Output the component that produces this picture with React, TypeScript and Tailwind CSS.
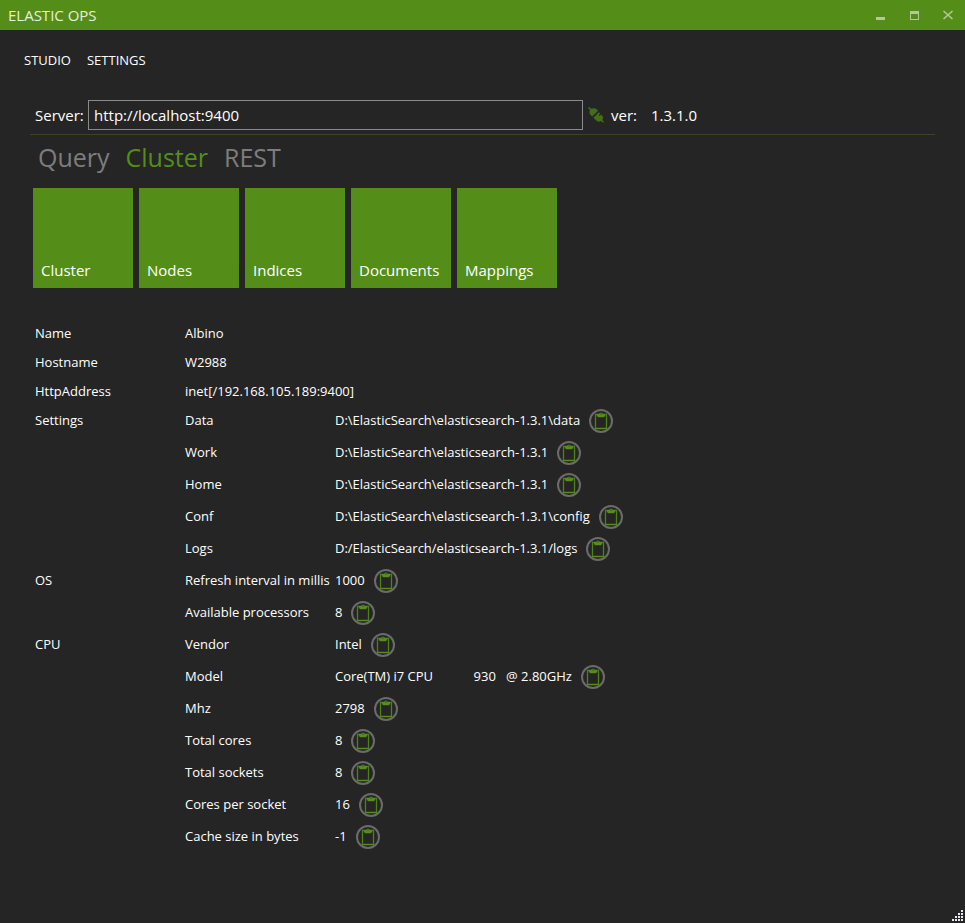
import React from "react";

type Row = { section?: string; span?: number; label: string; value?: string };

const general = [
  ["Name", "Albino"],
  ["Hostname", "W2988"],
  ["HttpAddress", "inet[/192.168.105.189:9400]"],
];

const details: Row[] = [
  { section: "Settings", span: 5, label: "Data", value: "D:\\ElasticSearch\\elasticsearch-1.3.1\\data" },
  { label: "Work", value: "D:\\ElasticSearch\\elasticsearch-1.3.1" },
  { label: "Home", value: "D:\\ElasticSearch\\elasticsearch-1.3.1" },
  { label: "Conf", value: "D:\\ElasticSearch\\elasticsearch-1.3.1\\config" },
  { label: "Logs", value: "D:/ElasticSearch/elasticsearch-1.3.1/logs" },
  { section: "OS", span: 2, label: "Refresh interval in millis", value: "1000" },
  { label: "Available processors", value: "8" },
  { section: "CPU", span: 7, label: "Vendor", value: "Intel" },
  { label: "Model", value: "Core(TM) i7 CPU            930   @ 2.80GHz" },
  { label: "Mhz", value: "2798" },
  { label: "Total cores", value: "8" },
  { label: "Total sockets", value: "8" },
  { label: "Cores per socket", value: "16" },
  { label: "Cache size in bytes", value: "-1" },
];

const tiles = ["Cluster", "Nodes", "Indices", "Documents", "Mappings"];

function CopyButton({ label }: { label: string }) {
  return (
    <button type="button" aria-label={`Copy ${label}`} className="size-6 shrink-0">
      <svg viewBox="0 0 24 24" className="size-6" fill="none">
        <circle cx="12" cy="12" r="11" stroke="#6b6b6b" strokeWidth="2" />
        <path d="M6.500 5.500h11v14h-11z" stroke="#4c8316" strokeWidth="1.300" />
        <path d="M6 19h12v1H6z" fill="#549019" />
        <path d="M8 5h2.300c0-.8.7-1.300 1.700-1.300s1.700.5 1.700 1.300H16v2l-1 1.300H9L8 7z" fill="#549019" />
        <path d="M11.500 4.600h1v.8h-1z" fill="#252525" />
      </svg>
    </button>
  );
}

function PlugIcon() {
  return (
    <svg viewBox="0 0 16 16" className="size-4" fill="#436f1c" role="img" aria-label="Connected">
      <path d="M0 .8 1 0l2.300 1.800C5.300.7 7.200 1 8.500 2.300L10 3.800 8.600 5.200 7.400 6.400 6.200 7.600 4.200 9.600 2.600 8C1.300 6.500 1.200 4.800 2 3.100z" />
      <path d="M10.800 5.200l1.400 1.400-1.500 1.500.9.900 1.500-1.500.9.900c1.300 1.400 1.200 3.200.3 4.600L16 15l-.9.800-2-1.700c-1.700.9-3.600.7-4.900-.6L5.400 10.700 7.700 8.400z" />
    </svg>
  );
}

export default function App() {
  return (
    <div className="relative flex min-h-screen flex-col bg-[#252525] font-['Open_Sans','Noto_Sans',sans-serif] text-white">
      <header className="flex h-[30px] items-center justify-between bg-[#548e19] pr-[9px] pl-2 text-[#e6efdd]">
        <h1 className="text-[15px]">ELASTIC OPS</h1>
        <div className="flex gap-[18px]">
          <button type="button" aria-label="Minimize" className="size-4">
            <svg viewBox="0 0 16 16" fill="#b0cc94"><path d="M4 10h9v3H4z" /></svg>
          </button>
          <button type="button" aria-label="Maximize" className="size-4">
            <svg viewBox="0 0 16 16" fill="#b0cc94"><path fillRule="evenodd" d="M4 4h9v9H4zM5 7v5h7V7z" /></svg>
          </button>
          <button type="button" aria-label="Close" className="size-4">
            <svg viewBox="0 0 16 16" stroke="#b0cc94" strokeWidth="1.6"><path d="M3.500 4l9 8M12.500 4l-9 8" /></svg>
          </button>
        </div>
      </header>

      <nav className="flex h-[60px] items-center gap-4 px-6 pt-[2px] text-[13px]">
        <button type="button">STUDIO</button>
        <button type="button">SETTINGS</button>
      </nav>

      <main className="px-[30px]">
        <div className="flex h-[45px] items-center border-b border-[#34491f] pt-[10px] pb-1 pl-[5px] text-[15px]">
          <label htmlFor="server" className="w-[53px]">Server:</label>
          <input
            id="server"
            defaultValue="http://localhost:9400"
            className="h-[30px] w-[495px] border border-[#8a8a8a] bg-transparent px-[5px] outline-none"
          />
          <span className="ml-[5px]"><PlugIcon /></span>
          <span className="ml-[7px] w-10">ver:</span>
          <span>1.3.1.0</span>
        </div>

        <div role="tablist" className="flex h-[53px] gap-4 pt-[2px] pl-2 text-[25px] leading-10 text-[#7d7d7d]">
          <button type="button" role="tab" className="h-10">Query</button>
          <button type="button" role="tab" aria-selected="true" className="h-10 text-[#548e19]">Cluster</button>
          <button type="button" role="tab" className="h-10">REST</button>
        </div>

        <div className="flex gap-[6px] pl-[3px]">
          {tiles.map((t) => (
            <button key={t} type="button" className="flex size-[100px] items-end bg-[#548e19] px-2 pb-[7px] text-[15px]">
              {t}
            </button>
          ))}
        </div>

        <table className="mt-[30px] ml-[5px] table-fixed text-left text-[13px]">
          <colgroup>
            <col className="w-[150px]" />
            <col className="w-[150px]" />
            <col className="w-[500px]" />
          </colgroup>
          <tbody>
            {general.map(([name, value]) => (
              <tr key={name} className="h-[29px]">
                <th scope="row" className="pt-[2px] font-normal">{name}</th>
                <td colSpan={2} className="pt-[2px]">{value}</td>
              </tr>
            ))}
            {details.map((r) => (
              <tr key={r.label} className="h-8 align-top leading-[30px]">
                {r.section && <th scope="rowgroup" rowSpan={r.span} className="font-normal">{r.section}</th>}
                <th scope="row" className="font-normal whitespace-nowrap">{r.label}</th>
                <td>
                  <div className="flex h-8 gap-[9px]">
                    <span className="whitespace-pre">{r.value}</span>
                    <span className="flex items-center"><CopyButton label={r.label} /></span>
                  </div>
                </td>
              </tr>
            ))}
          </tbody>
        </table>
      </main>

      <svg viewBox="0 0 12 12" className="absolute right-[1px] bottom-[1px] size-3" fill="#e8e8f0" aria-hidden="true">
        <path d="M9 0h2v2H9zM6 3h2v2H6zM9 3h2v2H9zM3 6h2v2H3zM6 6h2v2H6zM9 6h2v2H9zM0 9h2v2H0zM3 9h2v2H3zM6 9h2v2H6zM9 9h2v2H9z" />
      </svg>
    </div>
  );
}
